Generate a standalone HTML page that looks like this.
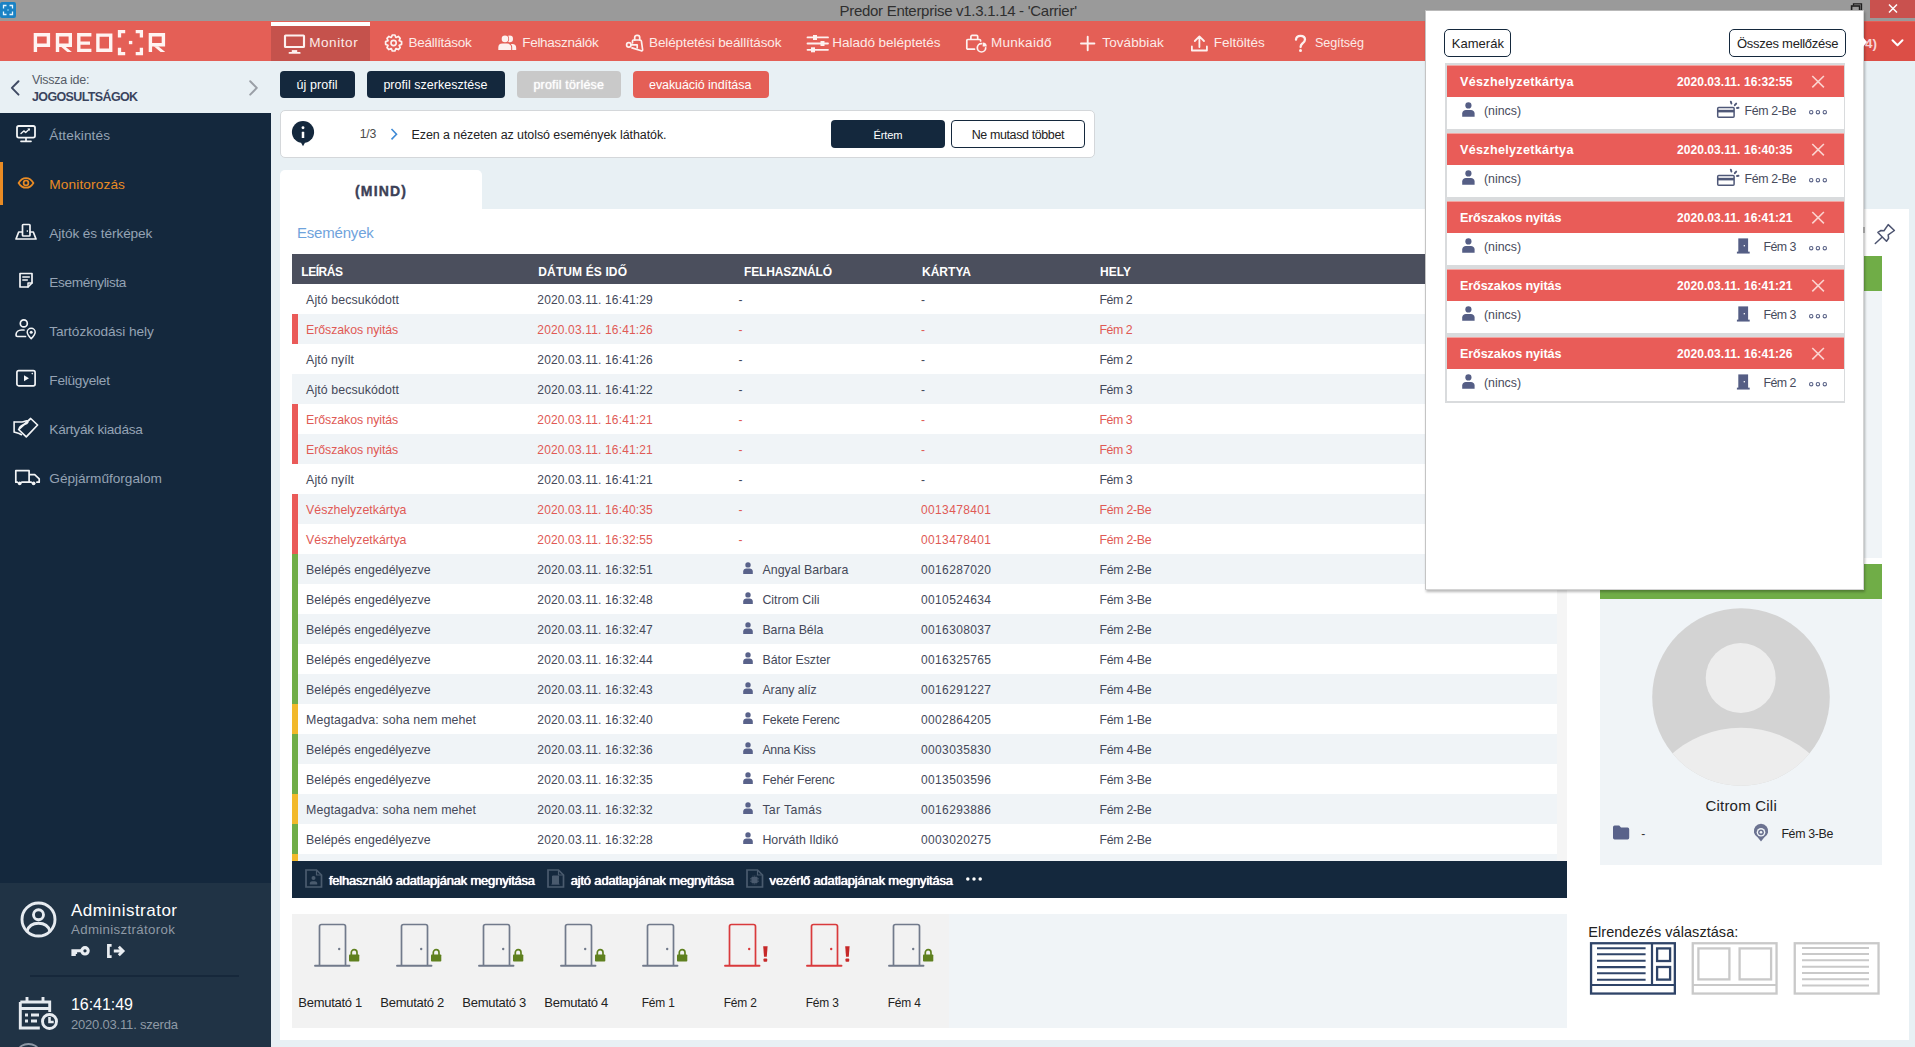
<!DOCTYPE html>
<html><head><meta charset="utf-8"><title>Predor Enterprise</title>
<style>
html,body{margin:0;padding:0;}
body{width:1915px;height:1047px;position:relative;overflow:hidden;background:#e8f0f4;font-family:"Liberation Sans",sans-serif;}
div,span.t,svg{position:absolute;}
div{box-sizing:border-box;}
span.t{white-space:pre;}
svg{overflow:visible;}
</style></head><body>
<div style="left:0px;top:0px;width:1915px;height:21.4px;background:#9a9a9a;"></div>
<div style="left:0px;top:2px;width:16px;height:16px;background:#1a82c4;border-radius:2px;"></div>
<svg style="left:0px;top:2px;" width="16" height="16" viewBox="0 0 16 16"><path d="M3.5 6.5v-3h3M9.5 3.5h3v3M12.5 9.5v3h-3M6.5 12.5h-3v-3" fill="none" stroke="#e6f6ff" stroke-width="1.3"/><rect x="7.3" y="7.3" width="1.4" height="1.4" fill="#8fd0f5"/></svg>
<span class="t" style="left:839.50px;top:0.00px;font-size:15.00px;line-height:21px;color:#2f2f2f;letter-spacing:-0.285px;">Predor Enterprise v1.3.1.14 - &#x27;Carrier&#x27;</span>
<div style="left:1870px;top:0px;width:45px;height:18px;background:#c9514e;"></div>
<svg style="left:1886px;top:2px;" width="14" height="14" viewBox="0 0 14 14"><path d="M3 2.5l8 8M11 2.5l-8 8" stroke="#fff" stroke-width="1.5" fill="none"/></svg>
<svg style="left:1849.5px;top:2px;" width="14" height="12" viewBox="0 0 14 12"><path d="M3.5 3.5v-1.700h8v6.500h-1.500" fill="none" stroke="#1e1e1e" stroke-width="1.3"/><rect x="1.6" y="4" width="8" height="6.5" fill="none" stroke="#1e1e1e" stroke-width="1.6"/></svg>
<div style="left:0px;top:21.4px;width:1915px;height:40.1px;background:#e45f56;"></div>
<div style="left:271px;top:21.8px;width:99px;height:39.7px;background:#c5524c;"></div>
<div style="left:271px;top:21.8px;width:99px;height:4.1px;background:#ffffff;"></div>
<span class="t" style="left:309.20px;top:33.00px;font-size:13.52px;line-height:19px;color:#fdebe8;letter-spacing:0.569px;">Monitor</span>
<span class="t" style="left:408.50px;top:33.00px;font-size:13.52px;line-height:19px;color:#fdebe8;letter-spacing:-0.284px;">Beállítások</span>
<span class="t" style="left:522.20px;top:33.00px;font-size:13.52px;line-height:19px;color:#fdebe8;letter-spacing:-0.288px;">Felhasználók</span>
<span class="t" style="left:649.10px;top:33.00px;font-size:13.52px;line-height:19px;color:#fdebe8;letter-spacing:-0.131px;">Beléptetési beállítások</span>
<span class="t" style="left:832.30px;top:33.00px;font-size:13.52px;line-height:19px;color:#fdebe8;letter-spacing:-0.043px;">Haladó beléptetés</span>
<span class="t" style="left:991.00px;top:33.00px;font-size:13.52px;line-height:19px;color:#fdebe8;letter-spacing:0.268px;">Munkaidő</span>
<span class="t" style="left:1102.30px;top:33.00px;font-size:13.52px;line-height:19px;color:#fdebe8;letter-spacing:0.077px;">Továbbiak</span>
<span class="t" style="left:1213.80px;top:33.00px;font-size:13.52px;line-height:19px;color:#fdebe8;letter-spacing:-0.012px;">Feltöltés</span>
<span class="t" style="left:1315.10px;top:34.00px;font-size:12.61px;line-height:18px;color:#fdebe8;letter-spacing:-0.139px;">Segítség</span>
<div style="left:1863px;top:21.8px;width:52px;height:39.7px;background:#dc4e46;"></div>
<svg style="left:283px;top:33px;" width="24" height="22" viewBox="0 0 24 22"><rect x="2" y="2.500" width="19" height="11.500" rx=".6" fill="none" stroke="#fdf1ef" stroke-width="2.15" stroke-linecap="round" stroke-linejoin="round"/><rect x="8.800" y="17.100" width="5.400" height="2.200" fill="#fdf1ef"/><rect x="5.600" y="18.900" width="12" height="1.900" rx=".9" fill="#fdf1ef"/></svg>
<svg style="left:383px;top:32px;" width="22" height="22" viewBox="0 0 22 22"><path d="M16.30 8.82 L18.59 9.67 L18.59 12.33 L16.30 13.18 L16.17 13.49 L17.19 15.71 L15.31 17.59 L13.09 16.57 L12.78 16.70 L11.93 18.99 L9.27 18.99 L8.42 16.70 L8.11 16.57 L5.89 17.59 L4.01 15.71 L5.03 13.49 L4.90 13.18 L2.61 12.33 L2.61 9.67 L4.90 8.82 L5.03 8.51 L4.01 6.29 L5.89 4.41 L8.11 5.43 L8.42 5.30 L9.27 3.01 L11.93 3.01 L12.78 5.30 L13.09 5.43 L15.31 4.41 L17.19 6.29 L16.17 8.51Z" fill="none" stroke="#fdf1ef" stroke-width="1.7" stroke-linecap="round" stroke-linejoin="round"/><circle cx="10.6" cy="11" r="2.6" fill="none" stroke="#fdf1ef" stroke-width="1.6" stroke-linecap="round" stroke-linejoin="round"/></svg>
<svg style="left:497px;top:34px;" width="22" height="18" viewBox="0 0 22 18"><circle cx="12.700" cy="4.900" r="3.300" fill="#fdf1ef"/><circle cx="8" cy="4.900" r="4.100" fill="#e45f56"/><circle cx="8" cy="4.900" r="3.300" fill="#fdf1ef"/><path d="M1.300 16.100v-2.500a4 4 0 0 1 4-4h4.900a4 4 0 0 1 4 4v2.500z" fill="#fdf1ef"/><path d="M15.200 16.100v-2.500c0-1.500-.5-2.800-1.400-3.700h1.400a4 4 0 0 1 4 4v2.200z" fill="#fdf1ef"/></svg>
<svg style="left:624px;top:33px;" width="22" height="22" viewBox="0 0 22 22"><path d="M10.700 7V4.500a2.200 2.200 0 0 1 2.200-2.200h.6a2.200 2.200 0 0 1 2.200 2.200V7" fill="none" stroke="#fdf1ef" stroke-width="1.7" stroke-linecap="round" stroke-linejoin="round"/><path d="M8.500 9.800v-1.800q0-1 1-1h6.500q1.200 0 1.400 1.200l1.200 8.300q.2 1.600-1.400 1.300l-9.200-2.900" fill="none" stroke="#fdf1ef" stroke-width="1.7" stroke-linecap="round" stroke-linejoin="round"/><circle cx="4.800" cy="11.900" r="2.200" fill="none" stroke="#fdf1ef" stroke-width="1.7" stroke-linecap="round" stroke-linejoin="round"/><path d="M7 11.900H13.200V14.800" fill="none" stroke="#fdf1ef" stroke-width="1.7" stroke-linecap="round" stroke-linejoin="round"/></svg>
<svg style="left:806px;top:34px;" width="24" height="20" viewBox="0 0 24 20"><path d="M1.5 3.400h20.500M1.500 9.500h20.500M1.500 15.800h20.500" fill="none" stroke="#fdf1ef" stroke-width="1.8" stroke-linecap="round" stroke-linejoin="round"/><rect x="7" y="1" width="4" height="5" fill="#fdf1ef"/><rect x="14.500" y="7" width="4" height="5" fill="#fdf1ef"/><rect x="5" y="13.300" width="4" height="5" fill="#fdf1ef"/></svg>
<svg style="left:964px;top:33px;" width="26" height="22" viewBox="0 0 26 22"><path d="M6.900 6V3.600a1.200 1.200 0 0 1 1.200-1.200h4.400a1.200 1.200 0 0 1 1.200 1.200V6" fill="none" stroke="#fdf1ef" stroke-width="1.7" stroke-linecap="round" stroke-linejoin="round"/><path d="M10.500 16.200H3.800a1 1 0 0 1-1-1V7.500a1 1 0 0 1 1-1H15.600a1 1 0 0 1 1 1V8" fill="none" stroke="#fdf1ef" stroke-width="1.7" stroke-linecap="round" stroke-linejoin="round"/><path d="M17.500 10.600A4.200 4.200 0 1 0 21.700 14.800" fill="none" stroke="#fdf1ef" stroke-width="1.7" stroke-linecap="round" stroke-linejoin="round"/><path d="M18.700 13.600V9.500A4.200 4.200 0 0 1 22.800 13.600Z" fill="#fdf1ef"/></svg>
<svg style="left:1079px;top:35px;" width="18" height="18" viewBox="0 0 18 18"><path d="M8.700 1.800v13.400M2 8.500h13.400" fill="none" stroke="#fdf1ef" stroke-width="1.9" stroke-linecap="round" stroke-linejoin="round"/></svg>
<svg style="left:1189px;top:33px;" width="22" height="22" viewBox="0 0 22 22"><path d="M10.400 14v-10.500M5.800 8l4.600-4.600l4.600 4.600" fill="none" stroke="#fdf1ef" stroke-width="1.8" stroke-linecap="round" stroke-linejoin="round"/><path d="M2.900 13.500v4h15v-4" fill="none" stroke="#fdf1ef" stroke-width="1.8" stroke-linecap="round" stroke-linejoin="round"/></svg>
<svg style="left:1293px;top:33px;" width="16" height="22" viewBox="0 0 16 22"><path d="M3 6.600c.2-2.500 2-3.800 4.500-3.800c2.600 0 4.500 1.400 4.500 3.800c0 2-1.300 2.900-2.600 3.900c-1.200.9-1.800 1.600-1.800 3.500" fill="none" stroke="#fdf1ef" stroke-width="2.3" stroke-linecap="round" stroke-linejoin="round"/><circle cx="7.500" cy="17.600" r="1.500" fill="#fdf1ef"/></svg>
<span class="t" style="left:1865.00px;top:34.00px;font-size:13.50px;line-height:19px;color:#f8d4d6;font-weight:700;">4)</span>
<svg style="left:1890px;top:36.6px;" width="16" height="12" viewBox="0 0 16 12"><path d="M2.500 3.300l5 5l5-5" fill="none" stroke="#fff" stroke-width="2" stroke-linecap="round" stroke-linejoin="round"/></svg>
<div style="left:0px;top:61.5px;width:271px;height:51.5px;background:#e8f0f4;"></div>
<div style="left:0px;top:113px;width:271px;height:934px;background:#14283d;"></div>
<div style="left:0px;top:883px;width:271px;height:164px;background:#203345;"></div>
<svg style="left:9px;top:78px;" width="14" height="20" viewBox="0 0 14 20"><path d="M9.500 3.200l-6.600 6.700l6.600 6.700" fill="none" stroke="#3f4a63" stroke-width="2" stroke-linecap="round" stroke-linejoin="round"/></svg>
<span class="t" style="left:32.00px;top:71.00px;font-size:12.48px;line-height:18px;color:#555b66;letter-spacing:-0.272px;">Vissza ide:</span>
<span class="t" style="left:32.00px;top:88.00px;font-size:12.48px;line-height:18px;color:#3a445e;font-weight:700;letter-spacing:-0.607px;">JOGOSULTSÁGOK</span>
<svg style="left:246px;top:78px;" width="14" height="20" viewBox="0 0 14 20"><path d="M4.200 3.200l6.600 6.700l-6.600 6.700" fill="none" stroke="#9a9fa6" stroke-width="2" stroke-linecap="round" stroke-linejoin="round"/></svg>
<span class="t" style="left:49.30px;top:126.00px;font-size:13.65px;line-height:19px;color:#95a3b4;letter-spacing:0.085px;">Áttekintés</span>
<span class="t" style="left:49.30px;top:175.00px;font-size:13.65px;line-height:19px;color:#e98b24;letter-spacing:0.135px;">Monitorozás</span>
<span class="t" style="left:49.30px;top:224.00px;font-size:13.65px;line-height:19px;color:#95a3b4;letter-spacing:-0.094px;">Ajtók és térképek</span>
<span class="t" style="left:49.30px;top:273.00px;font-size:13.65px;line-height:19px;color:#95a3b4;letter-spacing:-0.361px;">Eseménylista</span>
<span class="t" style="left:49.30px;top:322.00px;font-size:13.65px;line-height:19px;color:#95a3b4;letter-spacing:-0.048px;">Tartózkodási hely</span>
<span class="t" style="left:49.30px;top:371.00px;font-size:13.65px;line-height:19px;color:#95a3b4;letter-spacing:-0.253px;">Felügyelet</span>
<span class="t" style="left:49.30px;top:420.00px;font-size:13.65px;line-height:19px;color:#95a3b4;letter-spacing:-0.244px;">Kártyák kiadása</span>
<span class="t" style="left:49.30px;top:469.00px;font-size:13.65px;line-height:19px;color:#95a3b4;letter-spacing:-0.023px;">Gépjárműforgalom</span>
<div style="left:0px;top:162px;width:3px;height:43px;background:#e98b24;"></div>
<svg style="left:14px;top:123px;" width="24" height="21" viewBox="0 0 24 21"><rect x="3" y="3" width="18" height="11.600" rx="1.800" fill="none" stroke="#f2f4f6" stroke-width="1.8" stroke-linecap="round" stroke-linejoin="round"/><path d="M12 14.800v3M7 18.300h10" fill="none" stroke="#f2f4f6" stroke-width="1.7" stroke-linecap="round" stroke-linejoin="round"/><path d="M7 10.500l2.800-2.600l1.900 1.500l3.400-3.200" fill="none" stroke="#f2f4f6" stroke-width="1.4" stroke-linecap="round" stroke-linejoin="round"/><path d="M13.300 5.600h2.600v2.500z" fill="#f2f4f6"/></svg>
<svg style="left:16px;top:174px;" width="20" height="18" viewBox="0 0 20 18"><path d="M2.600 8.900c2-3.200 4.600-4.800 7.400-4.800s5.400 1.600 7.400 4.800c-2 3.200-4.600 4.800-7.400 4.800s-5.400-1.600-7.400-4.800z" fill="none" stroke="#e98b24" stroke-width="1.8" stroke-linecap="round" stroke-linejoin="round"/><circle cx="10" cy="8.900" r="2.400" fill="none" stroke="#e98b24" stroke-width="1.7" stroke-linecap="round" stroke-linejoin="round"/></svg>
<svg style="left:13px;top:221px;" width="26" height="21" viewBox="0 0 26 21"><rect x="9.500" y="3.500" width="7.500" height="11.500" rx=".8" fill="none" stroke="#f2f4f6" stroke-width="1.7" stroke-linecap="round" stroke-linejoin="round"/><path d="M9 11h-3.300l-2.700 7h20l-2.700-7h-3.300" fill="none" stroke="#f2f4f6" stroke-width="1.7" stroke-linecap="round" stroke-linejoin="round"/><rect x="13.700" y="9.300" width="1.300" height="1.500" fill="#f2f4f6"/></svg>
<svg style="left:17px;top:270px;" width="18" height="20" viewBox="0 0 18 20"><path d="M3 3.500h12v9.500l-4 4h-8z" fill="none" stroke="#f2f4f6" stroke-width="1.7" stroke-linecap="round" stroke-linejoin="round"/><path d="M15 13h-4v4" fill="none" stroke="#f2f4f6" stroke-width="1.5" stroke-linecap="round" stroke-linejoin="round"/><path d="M5.800 7h6.500M5.800 10h4.500" fill="none" stroke="#f2f4f6" stroke-width="1.5" stroke-linecap="round" stroke-linejoin="round"/></svg>
<svg style="left:13px;top:317px;" width="26" height="24" viewBox="0 0 26 24"><circle cx="10.800" cy="6.400" r="3.500" fill="none" stroke="#f2f4f6" stroke-width="1.7" stroke-linecap="round" stroke-linejoin="round"/><path d="M12.500 19.500h-8a1.500 1.500 0 0 1-1.500-1.500c0-3 2.500-5 5.500-5h2.500" fill="none" stroke="#f2f4f6" stroke-width="1.7" stroke-linecap="round" stroke-linejoin="round"/><path d="M18.200 21.800c-2.600-2.800-4-4.600-4-6.500a4 4 0 0 1 8 0c0 1.900-1.400 3.700-4 6.500z" fill="none" stroke="#f2f4f6" stroke-width="1.5" stroke-linecap="round" stroke-linejoin="round"/><circle cx="18.200" cy="15.200" r="1.500" fill="#f2f4f6"/></svg>
<svg style="left:14px;top:367px;" width="24" height="22" viewBox="0 0 24 22"><rect x="2.900" y="3.600" width="18.200" height="15.200" rx="1.800" fill="none" stroke="#f2f4f6" stroke-width="1.7" stroke-linecap="round" stroke-linejoin="round"/><path d="M10 8.200v6l5-3z" fill="#f2f4f6"/><circle cx="18.300" cy="6.600" r=".8" fill="#f2f4f6"/></svg>
<svg style="left:12px;top:416px;" width="28" height="24" viewBox="0 0 28 24"><path d="M6.600 13.500L18.700 2.500L25.600 9L14.300 20.800Z" fill="none" stroke="#f2f4f6" stroke-width="1.7" stroke-linecap="round" stroke-linejoin="round"/><path d="M2.100 5.800V16.300M2.100 6h6.500c2.500 0 3.500-.8 6.500-1.300M15.800 6.300c-1.500 2.800-5.500 1.200-8.300 5.200M2.100 16l5 1.500l2.400 1.200" fill="none" stroke="#f2f4f6" stroke-width="1.6" stroke-linecap="round" stroke-linejoin="round"/></svg>
<svg style="left:13px;top:467px;" width="28" height="20" viewBox="0 0 28 20"><path d="M2.800 15.200v-11.500h13.300v11.500M16.100 7.600h5.600l4.500 4.200v3.400h-2.300M18.200 15.200h-9.400M4.300 15.200h-1.500" fill="none" stroke="#f2f4f6" stroke-width="1.7" stroke-linecap="round" stroke-linejoin="round"/><circle cx="6.700" cy="16.300" r="1.900" fill="#f2f4f6"/><circle cx="20.600" cy="16.300" r="1.900" fill="#f2f4f6"/></svg>
<svg style="left:19.3px;top:900px;" width="40" height="40" viewBox="0 0 40 40"><circle cx="19.500" cy="19.500" r="16.500" fill="none" stroke="#e6ebf0" stroke-width="2.9" stroke-linecap="round" stroke-linejoin="round"/><circle cx="19.500" cy="14.800" r="5" fill="none" stroke="#e6ebf0" stroke-width="2.9" stroke-linecap="round" stroke-linejoin="round"/><path d="M8.200 31c1.500-5.500 6-7.800 11.300-7.800s9.800 2.300 11.300 7.800" fill="none" stroke="#e6ebf0" stroke-width="2.9" stroke-linecap="round" stroke-linejoin="round"/></svg>
<span class="t" style="left:71.00px;top:899.00px;font-size:17.00px;line-height:23px;color:#ffffff;letter-spacing:0.488px;">Administrator</span>
<span class="t" style="left:71.00px;top:920.00px;font-size:13.26px;line-height:19px;color:#8f9aa6;letter-spacing:0.350px;">Adminisztrátorok</span>
<svg style="left:71px;top:944px;" width="20" height="14" viewBox="0 0 20 14"><circle cx="14" cy="6.800" r="3.200" fill="none" stroke="#e9edf1" stroke-width="3.100"/><path d="M10.500 6.800h-8.600v3.600h1.400v-1.800h2.800" fill="none" stroke="#e9edf1" stroke-width="3"/></svg>
<svg style="left:106px;top:943px;" width="20" height="16" viewBox="0 0 20 16"><path d="M5.600 2.300h-3.200v11.400h3.200" fill="none" stroke="#e9edf1" stroke-width="2.700"/><path d="M7.800 8h8.500M12.800 3.800l4.300 4.200l-4.300 4.200" fill="none" stroke="#e9edf1" stroke-width="2.800"/></svg>
<div style="left:30px;top:975px;width:209px;height:2px;background:#16283b;"></div>
<svg style="left:17px;top:994px;" width="44" height="38" viewBox="0 0 44 38"><path d="M3.300 8h29.400v10M3.300 8v26h19.500M3.300 14.500h29.400" fill="none" stroke="#e6ebf0" stroke-width="2.900"/><path d="M10 3v6M26 3v6" stroke="#e6ebf0" stroke-width="2.900"/><path d="M8 21h3M14 21h8M8 27h3M14 27h6" stroke="#e6ebf0" stroke-width="2.900"/><circle cx="32.500" cy="27.500" r="7" fill="none" stroke="#e6ebf0" stroke-width="2.900"/><path d="M32.500 23v5h4.200" fill="none" stroke="#e6ebf0" stroke-width="2.600"/></svg>
<span class="t" style="left:71.00px;top:994.00px;font-size:16.00px;line-height:21px;color:#ffffff;letter-spacing:-0.040px;">16:41:49</span>
<span class="t" style="left:71.00px;top:1015.00px;font-size:13.00px;line-height:19px;color:#8f9aa6;letter-spacing:-0.197px;">2020.03.11. szerda</span>
<svg style="left:17px;top:1043px;" width="30" height="8" viewBox="0 0 30 8"><path d="M2 7a9.500 6 0 0 1 19 0" fill="none" stroke="#8c98a5" stroke-width="2"/></svg>
<div style="left:280px;top:71px;width:75px;height:27px;background:#14283d;border-radius:4px;"></div>
<span class="t" style="left:296.50px;top:76.00px;font-size:12.48px;line-height:18px;color:#fff;letter-spacing:0.108px;">új profil</span>
<div style="left:367px;top:71px;width:138px;height:27px;background:#14283d;border-radius:4px;"></div>
<span class="t" style="left:383.40px;top:76.00px;font-size:12.48px;line-height:18px;color:#fff;letter-spacing:0.047px;">profil szerkesztése</span>
<div style="left:517px;top:71px;width:104px;height:27px;background:#c9c9c9;border-radius:4px;"></div>
<span class="t" style="left:533.40px;top:76.00px;font-size:12.48px;line-height:18px;color:#ffffff;letter-spacing:0.202px;text-shadow:0 0 1.5px #fff;">profil törlése</span>
<div style="left:633px;top:71px;width:136px;height:27px;background:#e45f56;border-radius:4px;"></div>
<span class="t" style="left:649.00px;top:76.00px;font-size:12.48px;line-height:18px;color:#fff;letter-spacing:-0.057px;">evakuáció indítása</span>
<div style="left:280px;top:110px;width:815px;height:48px;background:#ffffff;border:1px solid #d4d7da;border-radius:5px;"></div>
<svg style="left:291.1px;top:120.1px;" width="24" height="27" viewBox="0 0 24 27"><circle cx="12" cy="12" r="11.100" fill="#14283d"/><path d="M9.800 22.300l2.200 3.900l2.200-3.900z" fill="#14283d"/><circle cx="12" cy="7.700" r="1.450" fill="#fff"/><rect x="10.750" y="11.800" width="2.500" height="6.300" rx=".3" fill="#fff"/></svg>
<span class="t" style="left:359.70px;top:125.00px;font-size:12.24px;line-height:18px;color:#4a4a4a;letter-spacing:-0.208px;">1/3</span>
<svg style="left:388px;top:127px;" width="12" height="14" viewBox="0 0 12 14"><path d="M3.500 2l5 5.200l-5 5.200" fill="none" stroke="#3f8ad6" stroke-width="1.600"/></svg>
<span class="t" style="left:411.50px;top:126.00px;font-size:12.48px;line-height:18px;color:#222;letter-spacing:-0.065px;">Ezen a nézeten az utolsó események láthatók.</span>
<div style="left:831px;top:120px;width:114px;height:28px;background:#14283d;border-radius:4px;"></div>
<span class="t" style="left:873.50px;top:127.00px;font-size:11.13px;line-height:16px;color:#fff;letter-spacing:-0.146px;">Értem</span>
<div style="left:951px;top:120px;width:134px;height:28px;background:#fff;border-radius:4px;border:1px solid #14283d;"></div>
<span class="t" style="left:971.70px;top:126.00px;font-size:12.48px;line-height:18px;color:#222;letter-spacing:-0.381px;">Ne mutasd többet</span>
<div style="left:280px;top:170px;width:202px;height:40px;background:#fff;border-radius:5px 5px 0 0;"></div>
<span class="t" style="left:355.00px;top:181.00px;font-size:14.00px;line-height:20px;color:#3b4056;font-weight:700;letter-spacing:1.180px;-webkit-text-stroke:.4px #3b4056;">(MIND)</span>
<div style="left:280px;top:209px;width:1629px;height:831px;background:#ffffff;"></div>
<span class="t" style="left:297.00px;top:222.00px;font-size:15.00px;line-height:21px;color:#6fa3dc;letter-spacing:-0.196px;">Események</span>
<svg style="left:0px;top:21px;" width="200" height="41" viewBox="0 21 200 41"><g fill="none" stroke="#fff4f2" stroke-width="3.400" stroke-linejoin="miter">
<path d="M35.400 52.100V34.700H48.400V45.200H36.400"/>
<path d="M57.500 52.100V34.700H70.300V45.200H58.500"/>
<path d="M91.400 34.700H78.800V50.400H91.400M79.500 43.100H90"/>
<path d="M97.900 35.100H110.700V50.300H97.900Z"/>
<path d="M150.400 52.100V34.700H163.400V44.800H151.400"/>
</g>
<path d="M60.800 46.500h4.400l6.700 5.600h-4.600z" fill="#fff4f2"/>
<path d="M153.800 46.200h4.400l7 5.900h-4.600z" fill="#fff4f2"/>
<g fill="none" stroke="#fff4f2" stroke-width="3.300">
<path d="M125.200 31.550H119.500V37.400M135.700 31.550H141.400V37.400M125.200 53.550H119.500V47.700M135.700 53.550H141.400V47.700"/>
</g><rect x="128.900" y="40.900" width="3.400" height="3.300" fill="#fff4f2"/></svg>
<div style="left:292px;top:254px;width:1265px;height:30px;background:#4b4f5d;"></div>
<span class="t" style="left:301.30px;top:263.00px;font-size:12.00px;line-height:18px;color:#fff;font-weight:700;letter-spacing:-0.461px;">LEÍRÁS</span>
<span class="t" style="left:538.30px;top:263.00px;font-size:12.00px;line-height:18px;color:#fff;font-weight:700;letter-spacing:0.124px;">DÁTUM ÉS IDŐ</span>
<span class="t" style="left:744.00px;top:263.00px;font-size:12.00px;line-height:18px;color:#fff;font-weight:700;letter-spacing:-0.133px;">FELHASZNÁLÓ</span>
<span class="t" style="left:922.00px;top:263.00px;font-size:12.00px;line-height:18px;color:#fff;font-weight:700;letter-spacing:0.020px;">KÁRTYA</span>
<span class="t" style="left:1100.00px;top:263.00px;font-size:12.00px;line-height:18px;color:#fff;font-weight:700;letter-spacing:0.032px;">HELY</span>
<span class="t" style="left:306.10px;top:291.00px;font-size:12.36px;line-height:18px;color:#444859;letter-spacing:0.101px;">Ajtó becsukódott</span>
<span class="t" style="left:537.30px;top:291.00px;font-size:12.00px;line-height:18px;color:#444859;letter-spacing:0.155px;">2020.03.11. 16:41:29</span>
<span class="t" style="left:738.50px;top:291.00px;font-size:12.00px;line-height:18px;color:#444859;">-</span>
<span class="t" style="left:921.00px;top:291.00px;font-size:12.00px;line-height:18px;color:#444859;">-</span>
<span class="t" style="left:1099.40px;top:291.00px;font-size:12.36px;line-height:18px;color:#444859;letter-spacing:-0.457px;">Fém 2</span>
<div style="left:292px;top:314px;width:1265px;height:30px;background:#f0f4f7;"></div>
<div style="left:292px;top:314px;width:6px;height:30px;background:#ea5a58;"></div>
<span class="t" style="left:306.10px;top:321.00px;font-size:12.36px;line-height:18px;color:#e05a55;letter-spacing:-0.082px;">Erőszakos nyitás</span>
<span class="t" style="left:537.30px;top:321.00px;font-size:12.00px;line-height:18px;color:#e05a55;letter-spacing:0.155px;">2020.03.11. 16:41:26</span>
<span class="t" style="left:738.50px;top:321.00px;font-size:12.00px;line-height:18px;color:#e05a55;">-</span>
<span class="t" style="left:921.00px;top:321.00px;font-size:12.00px;line-height:18px;color:#e05a55;">-</span>
<span class="t" style="left:1099.40px;top:321.00px;font-size:12.36px;line-height:18px;color:#e05a55;letter-spacing:-0.457px;">Fém 2</span>
<span class="t" style="left:306.10px;top:351.00px;font-size:12.36px;line-height:18px;color:#444859;letter-spacing:0.044px;">Ajtó nyílt</span>
<span class="t" style="left:537.30px;top:351.00px;font-size:12.00px;line-height:18px;color:#444859;letter-spacing:0.155px;">2020.03.11. 16:41:26</span>
<span class="t" style="left:738.50px;top:351.00px;font-size:12.00px;line-height:18px;color:#444859;">-</span>
<span class="t" style="left:921.00px;top:351.00px;font-size:12.00px;line-height:18px;color:#444859;">-</span>
<span class="t" style="left:1099.40px;top:351.00px;font-size:12.36px;line-height:18px;color:#444859;letter-spacing:-0.457px;">Fém 2</span>
<div style="left:292px;top:374px;width:1265px;height:30px;background:#f0f4f7;"></div>
<span class="t" style="left:306.10px;top:381.00px;font-size:12.36px;line-height:18px;color:#444859;letter-spacing:0.101px;">Ajtó becsukódott</span>
<span class="t" style="left:537.30px;top:381.00px;font-size:12.00px;line-height:18px;color:#444859;letter-spacing:0.155px;">2020.03.11. 16:41:22</span>
<span class="t" style="left:738.50px;top:381.00px;font-size:12.00px;line-height:18px;color:#444859;">-</span>
<span class="t" style="left:921.00px;top:381.00px;font-size:12.00px;line-height:18px;color:#444859;">-</span>
<span class="t" style="left:1099.40px;top:381.00px;font-size:12.36px;line-height:18px;color:#444859;letter-spacing:-0.457px;">Fém 3</span>
<div style="left:292px;top:404px;width:6px;height:30px;background:#ea5a58;"></div>
<span class="t" style="left:306.10px;top:411.00px;font-size:12.36px;line-height:18px;color:#e05a55;letter-spacing:-0.082px;">Erőszakos nyitás</span>
<span class="t" style="left:537.30px;top:411.00px;font-size:12.00px;line-height:18px;color:#e05a55;letter-spacing:0.155px;">2020.03.11. 16:41:21</span>
<span class="t" style="left:738.50px;top:411.00px;font-size:12.00px;line-height:18px;color:#e05a55;">-</span>
<span class="t" style="left:921.00px;top:411.00px;font-size:12.00px;line-height:18px;color:#e05a55;">-</span>
<span class="t" style="left:1099.40px;top:411.00px;font-size:12.36px;line-height:18px;color:#e05a55;letter-spacing:-0.457px;">Fém 3</span>
<div style="left:292px;top:434px;width:1265px;height:30px;background:#f0f4f7;"></div>
<div style="left:292px;top:434px;width:6px;height:30px;background:#ea5a58;"></div>
<span class="t" style="left:306.10px;top:441.00px;font-size:12.36px;line-height:18px;color:#e05a55;letter-spacing:-0.082px;">Erőszakos nyitás</span>
<span class="t" style="left:537.30px;top:441.00px;font-size:12.00px;line-height:18px;color:#e05a55;letter-spacing:0.155px;">2020.03.11. 16:41:21</span>
<span class="t" style="left:738.50px;top:441.00px;font-size:12.00px;line-height:18px;color:#e05a55;">-</span>
<span class="t" style="left:921.00px;top:441.00px;font-size:12.00px;line-height:18px;color:#e05a55;">-</span>
<span class="t" style="left:1099.40px;top:441.00px;font-size:12.36px;line-height:18px;color:#e05a55;letter-spacing:-0.457px;">Fém 3</span>
<span class="t" style="left:306.10px;top:471.00px;font-size:12.36px;line-height:18px;color:#444859;letter-spacing:0.044px;">Ajtó nyílt</span>
<span class="t" style="left:537.30px;top:471.00px;font-size:12.00px;line-height:18px;color:#444859;letter-spacing:0.155px;">2020.03.11. 16:41:21</span>
<span class="t" style="left:738.50px;top:471.00px;font-size:12.00px;line-height:18px;color:#444859;">-</span>
<span class="t" style="left:921.00px;top:471.00px;font-size:12.00px;line-height:18px;color:#444859;">-</span>
<span class="t" style="left:1099.40px;top:471.00px;font-size:12.36px;line-height:18px;color:#444859;letter-spacing:-0.457px;">Fém 3</span>
<div style="left:292px;top:494px;width:1265px;height:30px;background:#f0f4f7;"></div>
<div style="left:292px;top:494px;width:6px;height:30px;background:#ea5a58;"></div>
<span class="t" style="left:306.10px;top:501.00px;font-size:12.36px;line-height:18px;color:#e05a55;letter-spacing:0.006px;">Vészhelyzetkártya</span>
<span class="t" style="left:537.30px;top:501.00px;font-size:12.00px;line-height:18px;color:#e05a55;letter-spacing:0.155px;">2020.03.11. 16:40:35</span>
<span class="t" style="left:738.50px;top:501.00px;font-size:12.00px;line-height:18px;color:#e05a55;">-</span>
<span class="t" style="left:921.00px;top:501.00px;font-size:12.00px;line-height:18px;color:#e05a55;letter-spacing:0.362px;">0013478401</span>
<span class="t" style="left:1099.40px;top:501.00px;font-size:12.36px;line-height:18px;color:#e05a55;letter-spacing:-0.281px;">Fém 2-Be</span>
<div style="left:292px;top:524px;width:6px;height:30px;background:#ea5a58;"></div>
<span class="t" style="left:306.10px;top:531.00px;font-size:12.36px;line-height:18px;color:#e05a55;letter-spacing:0.006px;">Vészhelyzetkártya</span>
<span class="t" style="left:537.30px;top:531.00px;font-size:12.00px;line-height:18px;color:#e05a55;letter-spacing:0.155px;">2020.03.11. 16:32:55</span>
<span class="t" style="left:738.50px;top:531.00px;font-size:12.00px;line-height:18px;color:#e05a55;">-</span>
<span class="t" style="left:921.00px;top:531.00px;font-size:12.00px;line-height:18px;color:#e05a55;letter-spacing:0.362px;">0013478401</span>
<span class="t" style="left:1099.40px;top:531.00px;font-size:12.36px;line-height:18px;color:#e05a55;letter-spacing:-0.281px;">Fém 2-Be</span>
<div style="left:292px;top:554px;width:1265px;height:30px;background:#f0f4f7;"></div>
<div style="left:292px;top:554px;width:6px;height:30px;background:#70ad47;"></div>
<span class="t" style="left:306.10px;top:561.00px;font-size:12.36px;line-height:18px;color:#444859;letter-spacing:0.006px;">Belépés engedélyezve</span>
<span class="t" style="left:537.30px;top:561.00px;font-size:12.00px;line-height:18px;color:#444859;letter-spacing:0.155px;">2020.03.11. 16:32:51</span>
<svg style="left:743px;top:562px;" width="10" height="12.8" viewBox="0 0 10 12.8"><g fill="#59628a"><circle cx="5" cy="2.900" r="2.700"/><path d="M.200 12v-2.400c0-2 1.500-3.200 3.200-3.200h3.200c1.700 0 3.200 1.200 3.200 3.200v2.400z"/></g></svg>
<span class="t" style="left:762.40px;top:561.00px;font-size:12.36px;line-height:18px;color:#444859;letter-spacing:0.061px;">Angyal Barbara</span>
<span class="t" style="left:921.00px;top:561.00px;font-size:12.00px;line-height:18px;color:#444859;letter-spacing:0.362px;">0016287020</span>
<span class="t" style="left:1099.40px;top:561.00px;font-size:12.36px;line-height:18px;color:#444859;letter-spacing:-0.281px;">Fém 2-Be</span>
<div style="left:292px;top:584px;width:6px;height:30px;background:#70ad47;"></div>
<span class="t" style="left:306.10px;top:591.00px;font-size:12.36px;line-height:18px;color:#444859;letter-spacing:0.006px;">Belépés engedélyezve</span>
<span class="t" style="left:537.30px;top:591.00px;font-size:12.00px;line-height:18px;color:#444859;letter-spacing:0.155px;">2020.03.11. 16:32:48</span>
<svg style="left:743px;top:592px;" width="10" height="12.8" viewBox="0 0 10 12.8"><g fill="#59628a"><circle cx="5" cy="2.900" r="2.700"/><path d="M.200 12v-2.400c0-2 1.500-3.200 3.200-3.200h3.200c1.700 0 3.200 1.200 3.200 3.200v2.400z"/></g></svg>
<span class="t" style="left:762.40px;top:591.00px;font-size:12.36px;line-height:18px;color:#444859;letter-spacing:0.011px;">Citrom Cili</span>
<span class="t" style="left:921.00px;top:591.00px;font-size:12.00px;line-height:18px;color:#444859;letter-spacing:0.362px;">0010524634</span>
<span class="t" style="left:1099.40px;top:591.00px;font-size:12.36px;line-height:18px;color:#444859;letter-spacing:-0.281px;">Fém 3-Be</span>
<div style="left:292px;top:614px;width:1265px;height:30px;background:#f0f4f7;"></div>
<div style="left:292px;top:614px;width:6px;height:30px;background:#70ad47;"></div>
<span class="t" style="left:306.10px;top:621.00px;font-size:12.36px;line-height:18px;color:#444859;letter-spacing:0.006px;">Belépés engedélyezve</span>
<span class="t" style="left:537.30px;top:621.00px;font-size:12.00px;line-height:18px;color:#444859;letter-spacing:0.155px;">2020.03.11. 16:32:47</span>
<svg style="left:743px;top:622px;" width="10" height="12.8" viewBox="0 0 10 12.8"><g fill="#59628a"><circle cx="5" cy="2.900" r="2.700"/><path d="M.200 12v-2.400c0-2 1.500-3.200 3.200-3.200h3.200c1.700 0 3.200 1.200 3.200 3.200v2.400z"/></g></svg>
<span class="t" style="left:762.40px;top:621.00px;font-size:12.36px;line-height:18px;color:#444859;letter-spacing:-0.029px;">Barna Béla</span>
<span class="t" style="left:921.00px;top:621.00px;font-size:12.00px;line-height:18px;color:#444859;letter-spacing:0.362px;">0016308037</span>
<span class="t" style="left:1099.40px;top:621.00px;font-size:12.36px;line-height:18px;color:#444859;letter-spacing:-0.281px;">Fém 2-Be</span>
<div style="left:292px;top:644px;width:6px;height:30px;background:#70ad47;"></div>
<span class="t" style="left:306.10px;top:651.00px;font-size:12.36px;line-height:18px;color:#444859;letter-spacing:0.006px;">Belépés engedélyezve</span>
<span class="t" style="left:537.30px;top:651.00px;font-size:12.00px;line-height:18px;color:#444859;letter-spacing:0.155px;">2020.03.11. 16:32:44</span>
<svg style="left:743px;top:652px;" width="10" height="12.8" viewBox="0 0 10 12.8"><g fill="#59628a"><circle cx="5" cy="2.900" r="2.700"/><path d="M.200 12v-2.400c0-2 1.500-3.200 3.200-3.200h3.200c1.700 0 3.200 1.200 3.200 3.200v2.400z"/></g></svg>
<span class="t" style="left:762.40px;top:651.00px;font-size:12.36px;line-height:18px;color:#444859;letter-spacing:0.009px;">Bátor Eszter</span>
<span class="t" style="left:921.00px;top:651.00px;font-size:12.00px;line-height:18px;color:#444859;letter-spacing:0.362px;">0016325765</span>
<span class="t" style="left:1099.40px;top:651.00px;font-size:12.36px;line-height:18px;color:#444859;letter-spacing:-0.281px;">Fém 4-Be</span>
<div style="left:292px;top:674px;width:1265px;height:30px;background:#f0f4f7;"></div>
<div style="left:292px;top:674px;width:6px;height:30px;background:#70ad47;"></div>
<span class="t" style="left:306.10px;top:681.00px;font-size:12.36px;line-height:18px;color:#444859;letter-spacing:0.006px;">Belépés engedélyezve</span>
<span class="t" style="left:537.30px;top:681.00px;font-size:12.00px;line-height:18px;color:#444859;letter-spacing:0.155px;">2020.03.11. 16:32:43</span>
<svg style="left:743px;top:682px;" width="10" height="12.8" viewBox="0 0 10 12.8"><g fill="#59628a"><circle cx="5" cy="2.900" r="2.700"/><path d="M.200 12v-2.400c0-2 1.500-3.200 3.200-3.200h3.200c1.700 0 3.200 1.200 3.200 3.200v2.400z"/></g></svg>
<span class="t" style="left:762.40px;top:681.00px;font-size:12.36px;line-height:18px;color:#444859;letter-spacing:-0.062px;">Arany alíz</span>
<span class="t" style="left:921.00px;top:681.00px;font-size:12.00px;line-height:18px;color:#444859;letter-spacing:0.362px;">0016291227</span>
<span class="t" style="left:1099.40px;top:681.00px;font-size:12.36px;line-height:18px;color:#444859;letter-spacing:-0.281px;">Fém 4-Be</span>
<div style="left:292px;top:704px;width:6px;height:30px;background:#f2b92a;"></div>
<span class="t" style="left:306.10px;top:711.00px;font-size:12.36px;line-height:18px;color:#444859;letter-spacing:0.117px;">Megtagadva: soha nem mehet</span>
<span class="t" style="left:537.30px;top:711.00px;font-size:12.00px;line-height:18px;color:#444859;letter-spacing:0.155px;">2020.03.11. 16:32:40</span>
<svg style="left:743px;top:712px;" width="10" height="12.8" viewBox="0 0 10 12.8"><g fill="#59628a"><circle cx="5" cy="2.900" r="2.700"/><path d="M.200 12v-2.400c0-2 1.500-3.200 3.200-3.200h3.200c1.700 0 3.200 1.200 3.200 3.200v2.400z"/></g></svg>
<span class="t" style="left:762.40px;top:711.00px;font-size:12.36px;line-height:18px;color:#444859;letter-spacing:-0.191px;">Fekete Ferenc</span>
<span class="t" style="left:921.00px;top:711.00px;font-size:12.00px;line-height:18px;color:#444859;letter-spacing:0.362px;">0002864205</span>
<span class="t" style="left:1099.40px;top:711.00px;font-size:12.36px;line-height:18px;color:#444859;letter-spacing:-0.281px;">Fém 1-Be</span>
<div style="left:292px;top:734px;width:1265px;height:30px;background:#f0f4f7;"></div>
<div style="left:292px;top:734px;width:6px;height:30px;background:#70ad47;"></div>
<span class="t" style="left:306.10px;top:741.00px;font-size:12.36px;line-height:18px;color:#444859;letter-spacing:0.006px;">Belépés engedélyezve</span>
<span class="t" style="left:537.30px;top:741.00px;font-size:12.00px;line-height:18px;color:#444859;letter-spacing:0.155px;">2020.03.11. 16:32:36</span>
<svg style="left:743px;top:742px;" width="10" height="12.8" viewBox="0 0 10 12.8"><g fill="#59628a"><circle cx="5" cy="2.900" r="2.700"/><path d="M.200 12v-2.400c0-2 1.500-3.200 3.200-3.200h3.200c1.700 0 3.200 1.200 3.200 3.200v2.400z"/></g></svg>
<span class="t" style="left:762.40px;top:741.00px;font-size:12.36px;line-height:18px;color:#444859;letter-spacing:-0.294px;">Anna Kiss</span>
<span class="t" style="left:921.00px;top:741.00px;font-size:12.00px;line-height:18px;color:#444859;letter-spacing:0.362px;">0003035830</span>
<span class="t" style="left:1099.40px;top:741.00px;font-size:12.36px;line-height:18px;color:#444859;letter-spacing:-0.281px;">Fém 4-Be</span>
<div style="left:292px;top:764px;width:6px;height:30px;background:#70ad47;"></div>
<span class="t" style="left:306.10px;top:771.00px;font-size:12.36px;line-height:18px;color:#444859;letter-spacing:0.006px;">Belépés engedélyezve</span>
<span class="t" style="left:537.30px;top:771.00px;font-size:12.00px;line-height:18px;color:#444859;letter-spacing:0.155px;">2020.03.11. 16:32:35</span>
<svg style="left:743px;top:772px;" width="10" height="12.8" viewBox="0 0 10 12.8"><g fill="#59628a"><circle cx="5" cy="2.900" r="2.700"/><path d="M.200 12v-2.400c0-2 1.500-3.200 3.200-3.200h3.200c1.700 0 3.200 1.200 3.200 3.200v2.400z"/></g></svg>
<span class="t" style="left:762.40px;top:771.00px;font-size:12.36px;line-height:18px;color:#444859;letter-spacing:-0.181px;">Fehér Ferenc</span>
<span class="t" style="left:921.00px;top:771.00px;font-size:12.00px;line-height:18px;color:#444859;letter-spacing:0.362px;">0013503596</span>
<span class="t" style="left:1099.40px;top:771.00px;font-size:12.36px;line-height:18px;color:#444859;letter-spacing:-0.281px;">Fém 3-Be</span>
<div style="left:292px;top:794px;width:1265px;height:30px;background:#f0f4f7;"></div>
<div style="left:292px;top:794px;width:6px;height:30px;background:#f2b92a;"></div>
<span class="t" style="left:306.10px;top:801.00px;font-size:12.36px;line-height:18px;color:#444859;letter-spacing:0.117px;">Megtagadva: soha nem mehet</span>
<span class="t" style="left:537.30px;top:801.00px;font-size:12.00px;line-height:18px;color:#444859;letter-spacing:0.155px;">2020.03.11. 16:32:32</span>
<svg style="left:743px;top:802px;" width="10" height="12.8" viewBox="0 0 10 12.8"><g fill="#59628a"><circle cx="5" cy="2.900" r="2.700"/><path d="M.200 12v-2.400c0-2 1.500-3.200 3.200-3.200h3.200c1.700 0 3.200 1.200 3.200 3.200v2.400z"/></g></svg>
<span class="t" style="left:762.40px;top:801.00px;font-size:12.36px;line-height:18px;color:#444859;letter-spacing:0.302px;">Tar Tamás</span>
<span class="t" style="left:921.00px;top:801.00px;font-size:12.00px;line-height:18px;color:#444859;letter-spacing:0.362px;">0016293886</span>
<span class="t" style="left:1099.40px;top:801.00px;font-size:12.36px;line-height:18px;color:#444859;letter-spacing:-0.281px;">Fém 2-Be</span>
<div style="left:292px;top:824px;width:6px;height:30px;background:#70ad47;"></div>
<span class="t" style="left:306.10px;top:831.00px;font-size:12.36px;line-height:18px;color:#444859;letter-spacing:0.006px;">Belépés engedélyezve</span>
<span class="t" style="left:537.30px;top:831.00px;font-size:12.00px;line-height:18px;color:#444859;letter-spacing:0.155px;">2020.03.11. 16:32:28</span>
<svg style="left:743px;top:832px;" width="10" height="12.8" viewBox="0 0 10 12.8"><g fill="#59628a"><circle cx="5" cy="2.900" r="2.700"/><path d="M.200 12v-2.400c0-2 1.500-3.200 3.200-3.200h3.200c1.700 0 3.200 1.200 3.200 3.200v2.400z"/></g></svg>
<span class="t" style="left:762.40px;top:831.00px;font-size:12.36px;line-height:18px;color:#444859;letter-spacing:0.033px;">Horváth Ildikó</span>
<span class="t" style="left:921.00px;top:831.00px;font-size:12.00px;line-height:18px;color:#444859;letter-spacing:0.362px;">0003020275</span>
<span class="t" style="left:1099.40px;top:831.00px;font-size:12.36px;line-height:18px;color:#444859;letter-spacing:-0.281px;">Fém 2-Be</span>
<div style="left:292px;top:854px;width:1265px;height:7px;background:#f0f4f7;"></div>
<div style="left:292px;top:854px;width:6px;height:7px;background:#f2b92a;"></div>
<div style="left:1557px;top:284px;width:10px;height:577px;background:#f5f5f5;"></div>
<div style="left:292px;top:861px;width:1275px;height:37px;background:#14283d;"></div>
<svg style="left:304.7px;top:869.2px;" width="18" height="19" viewBox="0 0 18 19"><path d="M1 1h10.500l5 5v12h-15.500z" fill="none" stroke="#4a5b6e" stroke-width="1.700"/><path d="M11.500 1v5h5" fill="none" stroke="#4a5b6e" stroke-width="1.200"/><circle cx="8.500" cy="9" r="2" fill="#4a5b6e"/><path d="M4.800 15.500v-1c0-1.400 1.200-2.200 2.300-2.200h2.800c1.100 0 2.300 .8 2.300 2.200v1z" fill="#4a5b6e"/></svg>
<svg style="left:546.6px;top:869.2px;" width="18" height="19" viewBox="0 0 18 19"><path d="M1 1h10.500l5 5v12h-15.500z" fill="none" stroke="#4a5b6e" stroke-width="1.700"/><path d="M11.500 1v5h5" fill="none" stroke="#4a5b6e" stroke-width="1.200"/><path d="M5.500 15v-8h6v8M4.500 15.200h8" fill="#4a5b6e" stroke="#4a5b6e" stroke-width="1"/></svg>
<svg style="left:745.6px;top:869.2px;" width="18" height="19" viewBox="0 0 18 19"><path d="M1 1h10.500l5 5v12h-15.500z" fill="none" stroke="#4a5b6e" stroke-width="1.700"/><path d="M11.500 1v5h5" fill="none" stroke="#4a5b6e" stroke-width="1.200"/><rect x="5.500" y="8" width="6" height="6" fill="#4a5b6e"/><path d="M4 9.500h9M4 11h9M4 12.500h9M7 6.500v9M8.500 6.500v9M10 6.500v9" stroke="#4a5b6e" stroke-width=".6"/></svg>
<span class="t" style="left:328.90px;top:871.00px;font-size:13.00px;line-height:19px;color:#fff;letter-spacing:-0.206px;text-shadow:0 0 .7px #fff,0 0 .7px #fff;">felhasználó adatlapjának megnyitása</span>
<span class="t" style="left:570.70px;top:871.00px;font-size:13.00px;line-height:19px;color:#fff;letter-spacing:-0.185px;text-shadow:0 0 .7px #fff,0 0 .7px #fff;">ajtó adatlapjának megnyitása</span>
<span class="t" style="left:769.60px;top:871.00px;font-size:13.00px;line-height:19px;color:#fff;letter-spacing:-0.195px;text-shadow:0 0 .7px #fff,0 0 .7px #fff;">vezérlő adatlapjának megnyitása</span>
<svg style="left:964px;top:876px;" width="20" height="6" viewBox="0 0 20 6"><circle cx="3.800" cy="3.100" r="1.750" fill="#fff"/><circle cx="10" cy="3.100" r="1.750" fill="#fff"/><circle cx="16.200" cy="3.100" r="1.750" fill="#fff"/></svg>
<div style="left:292px;top:914px;width:1275px;height:114px;background:#f0f4f7;"></div>
<div style="left:292px;top:914px;width:657px;height:114px;background:#f2f2f2;"></div>
<svg style="left:313px;top:922px;" width="50" height="48" viewBox="0 0 50 48"><path d="M6.500 43.500v-39a2 2 0 0 1 2-2h22a2 2 0 0 1 2 2v39" fill="none" stroke="#717a8b" stroke-width="1.700"/><path d="M2 43.700h34.500" stroke="#717a8b" stroke-width="1.900" stroke-linecap="round"/><circle cx="26.200" cy="27" r="1.200" fill="#717a8b"/><rect x="36" y="32.500" width="10.300" height="7" rx=".8" fill="#5f801f"/><path d="M38.300 33v-2.500a2.850 2.850 0 0 1 5.700 0v2.500" fill="none" stroke="#5f801f" stroke-width="1.700"/></svg>
<span class="t" style="left:298.35px;top:993.00px;font-size:13.00px;line-height:19px;color:#222;letter-spacing:-0.287px;">Bemutató 1</span>
<svg style="left:395px;top:922px;" width="50" height="48" viewBox="0 0 50 48"><path d="M6.500 43.500v-39a2 2 0 0 1 2-2h22a2 2 0 0 1 2 2v39" fill="none" stroke="#717a8b" stroke-width="1.700"/><path d="M2 43.700h34.500" stroke="#717a8b" stroke-width="1.900" stroke-linecap="round"/><circle cx="26.200" cy="27" r="1.200" fill="#717a8b"/><rect x="36" y="32.500" width="10.300" height="7" rx=".8" fill="#5f801f"/><path d="M38.300 33v-2.500a2.850 2.850 0 0 1 5.700 0v2.500" fill="none" stroke="#5f801f" stroke-width="1.700"/></svg>
<span class="t" style="left:380.35px;top:993.00px;font-size:13.00px;line-height:19px;color:#222;letter-spacing:-0.287px;">Bemutató 2</span>
<svg style="left:477px;top:922px;" width="50" height="48" viewBox="0 0 50 48"><path d="M6.500 43.500v-39a2 2 0 0 1 2-2h22a2 2 0 0 1 2 2v39" fill="none" stroke="#717a8b" stroke-width="1.700"/><path d="M2 43.700h34.500" stroke="#717a8b" stroke-width="1.900" stroke-linecap="round"/><circle cx="26.200" cy="27" r="1.200" fill="#717a8b"/><rect x="36" y="32.500" width="10.300" height="7" rx=".8" fill="#5f801f"/><path d="M38.300 33v-2.500a2.850 2.850 0 0 1 5.700 0v2.500" fill="none" stroke="#5f801f" stroke-width="1.700"/></svg>
<span class="t" style="left:462.35px;top:993.00px;font-size:13.00px;line-height:19px;color:#222;letter-spacing:-0.287px;">Bemutató 3</span>
<svg style="left:559px;top:922px;" width="50" height="48" viewBox="0 0 50 48"><path d="M6.500 43.500v-39a2 2 0 0 1 2-2h22a2 2 0 0 1 2 2v39" fill="none" stroke="#717a8b" stroke-width="1.700"/><path d="M2 43.700h34.500" stroke="#717a8b" stroke-width="1.900" stroke-linecap="round"/><circle cx="26.200" cy="27" r="1.200" fill="#717a8b"/><rect x="36" y="32.500" width="10.300" height="7" rx=".8" fill="#5f801f"/><path d="M38.300 33v-2.500a2.850 2.850 0 0 1 5.700 0v2.500" fill="none" stroke="#5f801f" stroke-width="1.700"/></svg>
<span class="t" style="left:544.35px;top:993.00px;font-size:13.00px;line-height:19px;color:#222;letter-spacing:-0.287px;">Bemutató 4</span>
<svg style="left:641px;top:922px;" width="50" height="48" viewBox="0 0 50 48"><path d="M6.500 43.500v-39a2 2 0 0 1 2-2h22a2 2 0 0 1 2 2v39" fill="none" stroke="#717a8b" stroke-width="1.700"/><path d="M2 43.700h34.500" stroke="#717a8b" stroke-width="1.900" stroke-linecap="round"/><circle cx="26.200" cy="27" r="1.200" fill="#717a8b"/><rect x="36" y="32.500" width="10.300" height="7" rx=".8" fill="#5f801f"/><path d="M38.300 33v-2.500a2.850 2.850 0 0 1 5.700 0v2.500" fill="none" stroke="#5f801f" stroke-width="1.700"/></svg>
<span class="t" style="left:641.70px;top:994.00px;font-size:11.95px;line-height:18px;color:#222;letter-spacing:-0.166px;">Fém 1</span>
<svg style="left:723px;top:922px;" width="50" height="48" viewBox="0 0 50 48"><path d="M6.500 43.500v-39a2 2 0 0 1 2-2h22a2 2 0 0 1 2 2v39" fill="none" stroke="#d93a3c" stroke-width="1.700"/><path d="M2 43.700h34.500" stroke="#d93a3c" stroke-width="1.900" stroke-linecap="round"/><circle cx="26.200" cy="27" r="1.200" fill="#d93a3c"/><path d="M40.200 24.200h4.400l-.8 10.500h-2.800z" fill="#c62828"/><rect x="40.500" y="36.500" width="3.700" height="3.200" rx=".8" fill="#c62828"/></svg>
<span class="t" style="left:723.70px;top:994.00px;font-size:11.95px;line-height:18px;color:#222;letter-spacing:-0.166px;">Fém 2</span>
<svg style="left:805px;top:922px;" width="50" height="48" viewBox="0 0 50 48"><path d="M6.500 43.500v-39a2 2 0 0 1 2-2h22a2 2 0 0 1 2 2v39" fill="none" stroke="#d93a3c" stroke-width="1.700"/><path d="M2 43.700h34.500" stroke="#d93a3c" stroke-width="1.900" stroke-linecap="round"/><circle cx="26.200" cy="27" r="1.200" fill="#d93a3c"/><path d="M40.200 24.200h4.400l-.8 10.500h-2.800z" fill="#c62828"/><rect x="40.500" y="36.500" width="3.700" height="3.200" rx=".8" fill="#c62828"/></svg>
<span class="t" style="left:805.70px;top:994.00px;font-size:11.95px;line-height:18px;color:#222;letter-spacing:-0.166px;">Fém 3</span>
<svg style="left:887px;top:922px;" width="50" height="48" viewBox="0 0 50 48"><path d="M6.500 43.500v-39a2 2 0 0 1 2-2h22a2 2 0 0 1 2 2v39" fill="none" stroke="#717a8b" stroke-width="1.700"/><path d="M2 43.700h34.500" stroke="#717a8b" stroke-width="1.900" stroke-linecap="round"/><circle cx="26.200" cy="27" r="1.200" fill="#717a8b"/><rect x="36" y="32.500" width="10.300" height="7" rx=".8" fill="#5f801f"/><path d="M38.300 33v-2.500a2.850 2.850 0 0 1 5.700 0v2.500" fill="none" stroke="#5f801f" stroke-width="1.700"/></svg>
<span class="t" style="left:887.70px;top:994.00px;font-size:11.95px;line-height:18px;color:#222;letter-spacing:-0.166px;">Fém 4</span>
<div style="left:1600px;top:256px;width:282px;height:35px;background:#70ad47;"></div>
<div style="left:1600px;top:291px;width:282px;height:267px;background:#f0f4f7;"></div>
<div style="left:1600px;top:564.1px;width:282px;height:34.6px;background:#70ad47;"></div>
<div style="left:1600px;top:598.7px;width:282px;height:266px;background:#f0f4f7;"></div>
<svg style="left:1652px;top:608px;" width="178" height="178" viewBox="0 0 178 178"><defs><clipPath id="av"><circle cx="89" cy="89" r="88.800"/></clipPath></defs><circle cx="89" cy="89" r="88.800" fill="#d3d3d3"/><g clip-path="url(#av)"><circle cx="88.700" cy="70" r="35" fill="#ededed"/><circle cx="89" cy="224" r="104.300" fill="#ededed"/></g></svg>
<span class="t" style="left:1705.45px;top:795.00px;font-size:15.00px;line-height:21px;color:#222;letter-spacing:0.213px;">Citrom Cili</span>
<svg style="left:1613px;top:825px;" width="17" height="15" viewBox="0 0 17 15"><path d="M0 2.200a1.600 1.600 0 0 1 1.600-1.600h4.600l1.800 2h6.600a1.600 1.600 0 0 1 1.600 1.600v8.600a1.600 1.600 0 0 1-1.600 1.600h-13a1.600 1.600 0 0 1-1.600-1.600z" fill="#59628a"/></svg>
<span class="t" style="left:1641.20px;top:825.00px;font-size:12.00px;line-height:18px;color:#333;">-</span>
<svg style="left:1753px;top:824px;" width="16" height="18" viewBox="0 0 16 18"><path d="M8 17.400l-3.200-4a7.200 7.200 0 1 1 6.400 0z" fill="#6c7391"/><circle cx="8" cy="8.300" r="4.300" fill="#f0f4f7"/><circle cx="8" cy="8.300" r="2.900" fill="#6c7391"/><circle cx="8" cy="8.300" r="1.300" fill="#f0f4f7"/></svg>
<span class="t" style="left:1781.40px;top:825.00px;font-size:12.36px;line-height:18px;color:#222;letter-spacing:-0.323px;">Fém 3-Be</span>
<svg style="left:1870px;top:220px;" width="30" height="28" viewBox="0 0 30 28"><path d="M5.300 23.500l7-6.500M7.900 12.400l3.100-1.900l3 .2l4.200-6.100l6.200 5.900l-6.200 4.400l.4 3.400l-2.100 2.900z" fill="none" stroke="#4d5470" stroke-width="1.500" stroke-linejoin="round" stroke-linecap="round"/></svg>
<span class="t" style="left:1588.30px;top:922.00px;font-size:14.50px;line-height:20px;color:#222;letter-spacing:0.042px;">Elrendezés választása:</span>
<svg style="left:1589px;top:941px;" width="88" height="55" viewBox="0 0 88 55"><rect x="2.050" y="2.250" width="83.800" height="50.300" fill="none" stroke="#2f4468" stroke-width="2.300"/><path d="M63 2v42M2 44h84" stroke="#2f4468" stroke-width="2.200" fill="none"/><path d="M8 7.2h48.600" stroke="#2f4468" stroke-width="2.100"/><path d="M8 13.3h48.600" stroke="#2f4468" stroke-width="2.100"/><path d="M8 19.8h48.600" stroke="#2f4468" stroke-width="2.100"/><path d="M8 26.1h48.600" stroke="#2f4468" stroke-width="2.100"/><path d="M8 32.3h48.600" stroke="#2f4468" stroke-width="2.100"/><path d="M8 38.8h48.600" stroke="#2f4468" stroke-width="2.100"/><rect x="68.100" y="7.400" width="13" height="12.600" fill="none" stroke="#2f4468" stroke-width="2.300"/><rect x="68.100" y="26" width="13" height="12.600" fill="none" stroke="#2f4468" stroke-width="2.300"/></svg>
<svg style="left:1691px;top:941px;" width="88" height="55" viewBox="0 0 88 55"><rect x="1.750" y="2.250" width="83.800" height="50.300" fill="none" stroke="#c9c9c9" stroke-width="2.300"/><path d="M1.600 44h84" stroke="#c9c9c9" stroke-width="2.200"/><rect x="7.400" y="7.400" width="31" height="31" fill="none" stroke="#c9c9c9" stroke-width="2.300"/><rect x="48.600" y="7.400" width="31.500" height="31" fill="none" stroke="#c9c9c9" stroke-width="2.300"/></svg>
<svg style="left:1793px;top:941px;" width="88" height="55" viewBox="0 0 88 55"><rect x="1.750" y="2.250" width="83.800" height="50.300" fill="none" stroke="#c9c9c9" stroke-width="2.300"/><path d="M9 6.9h67" stroke="#c9c9c9" stroke-width="2"/><path d="M9 13.0h67" stroke="#c9c9c9" stroke-width="2"/><path d="M9 19.3h67" stroke="#c9c9c9" stroke-width="2"/><path d="M9 25.8h67" stroke="#c9c9c9" stroke-width="2"/><path d="M9 32.0h67" stroke="#c9c9c9" stroke-width="2"/><path d="M9 38.3h67" stroke="#c9c9c9" stroke-width="2"/><path d="M9 44.4h67" stroke="#c9c9c9" stroke-width="2"/></svg>
<div style="left:1425px;top:9.5px;width:439px;height:580.5px;background:#ffffff;border:1px solid #d4d4d4;border-left-color:#c4c4c4;border-top-color:#b9b9b9;box-shadow:1px 1.500px 2.500px rgba(0,0,0,.28);"></div>
<svg style="left:1862px;top:36px;" width="6" height="12" viewBox="0 0 6 12"><path d="M0 0l5 6l-5 6z" fill="#fff"/></svg>
<div style="left:1444px;top:29px;width:67px;height:28px;background:#fff;border:1.300px solid #14283d;border-radius:5px;"></div>
<span class="t" style="left:1451.70px;top:34.00px;font-size:13.00px;line-height:19px;color:#222;letter-spacing:0.046px;">Kamerák</span>
<div style="left:1729px;top:29px;width:117px;height:28px;background:#fff;border:1.300px solid #14283d;border-radius:5px;"></div>
<span class="t" style="left:1737.00px;top:34.00px;font-size:13.00px;line-height:19px;color:#222;letter-spacing:-0.265px;">Összes mellőzése</span>
<div style="left:1445px;top:63px;width:400px;height:340px;background:#d9dbdd;"></div>
<div style="left:1447px;top:65px;width:396.5px;height:32px;background:#e95c58;border-top:1px solid #f3a39f;"></div>
<div style="left:1447px;top:97px;width:396.5px;height:32.3px;background:#ffffff;"></div>
<span class="t" style="left:1460.00px;top:73.00px;font-size:12.60px;line-height:18px;color:#fff;font-weight:700;letter-spacing:0.308px;">Vészhelyzetkártya</span>
<span class="t" style="left:1676.90px;top:73.00px;font-size:12.00px;line-height:18px;color:#fff;font-weight:700;letter-spacing:0.079px;">2020.03.11. 16:32:55</span>
<svg style="left:1810px;top:74px;" width="16" height="16" viewBox="0 0 16 16"><path d="M2.300 2l11.600 11.400M13.900 2l-11.600 11.400" stroke="#fbd3cf" stroke-width="1.600" fill="none"/></svg>
<svg style="left:1461.5px;top:102px;" width="13" height="15" viewBox="0 0 13 15"><g fill="#555e85"><circle cx="6.400" cy="3.400" r="3.100"/><path d="M.2 14.700v-3.200c0-2.300 1.800-3.500 3.600-3.500h5.200c1.800 0 3.600 1.200 3.600 3.500v3.200z"/></g></svg>
<span class="t" style="left:1484.00px;top:102.00px;font-size:12.36px;line-height:18px;color:#474b5c;letter-spacing:-0.015px;">(nincs)</span>
<svg style="left:1716px;top:100px;" width="26" height="20" viewBox="0 0 26 20"><rect x="1.700" y="7.600" width="16.400" height="9.600" rx="1" fill="none" stroke="#4f5878" stroke-width="1.500"/><rect x="1.700" y="9.800" width="16.400" height="2.600" fill="#4f5878"/><path d="M15.400 3.600l-.6-2M18.800 5.200l1.400-1.600M21 8l1.500-.2" stroke="#4f5878" stroke-width="1.900" stroke-linecap="round"/></svg>
<span class="t" style="left:1744.50px;top:102.00px;font-size:12.36px;line-height:18px;color:#474b5c;letter-spacing:-0.338px;">Fém 2-Be</span>
<svg style="left:1808px;top:108px;" width="20" height="8" viewBox="0 0 20 8"><circle cx="3.2" cy="4.200" r="1.700" fill="none" stroke="#5b6488" stroke-width="1.100"/><circle cx="9.9" cy="4.200" r="1.700" fill="none" stroke="#5b6488" stroke-width="1.100"/><circle cx="16.8" cy="4.200" r="1.700" fill="none" stroke="#5b6488" stroke-width="1.100"/></svg>
<div style="left:1447px;top:133px;width:396.5px;height:32px;background:#e95c58;border-top:1px solid #f3a39f;"></div>
<div style="left:1447px;top:165px;width:396.5px;height:32.3px;background:#ffffff;"></div>
<span class="t" style="left:1460.00px;top:141.00px;font-size:12.60px;line-height:18px;color:#fff;font-weight:700;letter-spacing:0.308px;">Vészhelyzetkártya</span>
<span class="t" style="left:1676.90px;top:141.00px;font-size:12.00px;line-height:18px;color:#fff;font-weight:700;letter-spacing:0.079px;">2020.03.11. 16:40:35</span>
<svg style="left:1810px;top:142px;" width="16" height="16" viewBox="0 0 16 16"><path d="M2.300 2l11.600 11.400M13.900 2l-11.600 11.400" stroke="#fbd3cf" stroke-width="1.600" fill="none"/></svg>
<svg style="left:1461.5px;top:170px;" width="13" height="15" viewBox="0 0 13 15"><g fill="#555e85"><circle cx="6.400" cy="3.400" r="3.100"/><path d="M.2 14.700v-3.200c0-2.300 1.800-3.500 3.600-3.500h5.200c1.800 0 3.600 1.200 3.600 3.500v3.200z"/></g></svg>
<span class="t" style="left:1484.00px;top:170.00px;font-size:12.36px;line-height:18px;color:#474b5c;letter-spacing:-0.015px;">(nincs)</span>
<svg style="left:1716px;top:168px;" width="26" height="20" viewBox="0 0 26 20"><rect x="1.700" y="7.600" width="16.400" height="9.600" rx="1" fill="none" stroke="#4f5878" stroke-width="1.500"/><rect x="1.700" y="9.800" width="16.400" height="2.600" fill="#4f5878"/><path d="M15.400 3.600l-.6-2M18.800 5.200l1.400-1.600M21 8l1.500-.2" stroke="#4f5878" stroke-width="1.900" stroke-linecap="round"/></svg>
<span class="t" style="left:1744.50px;top:170.00px;font-size:12.36px;line-height:18px;color:#474b5c;letter-spacing:-0.338px;">Fém 2-Be</span>
<svg style="left:1808px;top:176px;" width="20" height="8" viewBox="0 0 20 8"><circle cx="3.2" cy="4.200" r="1.700" fill="none" stroke="#5b6488" stroke-width="1.100"/><circle cx="9.9" cy="4.200" r="1.700" fill="none" stroke="#5b6488" stroke-width="1.100"/><circle cx="16.8" cy="4.200" r="1.700" fill="none" stroke="#5b6488" stroke-width="1.100"/></svg>
<div style="left:1447px;top:201px;width:396.5px;height:32px;background:#e95c58;border-top:1px solid #f3a39f;"></div>
<div style="left:1447px;top:233px;width:396.5px;height:32.3px;background:#ffffff;"></div>
<span class="t" style="left:1460.00px;top:209.00px;font-size:12.60px;line-height:18px;color:#fff;font-weight:700;letter-spacing:-0.097px;">Erőszakos nyitás</span>
<span class="t" style="left:1676.90px;top:209.00px;font-size:12.00px;line-height:18px;color:#fff;font-weight:700;letter-spacing:0.079px;">2020.03.11. 16:41:21</span>
<svg style="left:1810px;top:210px;" width="16" height="16" viewBox="0 0 16 16"><path d="M2.300 2l11.600 11.400M13.900 2l-11.600 11.400" stroke="#fbd3cf" stroke-width="1.600" fill="none"/></svg>
<svg style="left:1461.5px;top:238px;" width="13" height="15" viewBox="0 0 13 15"><g fill="#555e85"><circle cx="6.400" cy="3.400" r="3.100"/><path d="M.2 14.700v-3.200c0-2.300 1.800-3.500 3.600-3.500h5.200c1.800 0 3.600 1.200 3.600 3.500v3.200z"/></g></svg>
<span class="t" style="left:1484.00px;top:238.00px;font-size:12.36px;line-height:18px;color:#474b5c;letter-spacing:-0.015px;">(nincs)</span>
<svg style="left:1736px;top:238px;" width="15" height="17" viewBox="0 0 15 17"><rect x="2.300" y=".4" width="9.800" height="14" fill="#555e85"/><path d="M.9 14.600h12.800" stroke="#555e85" stroke-width="1.900"/><rect x="7.700" y="7" width="1.200" height="1.400" fill="#fff"/></svg>
<span class="t" style="left:1763.50px;top:238.00px;font-size:12.36px;line-height:18px;color:#474b5c;letter-spacing:-0.532px;">Fém 3</span>
<svg style="left:1808px;top:244px;" width="20" height="8" viewBox="0 0 20 8"><circle cx="3.2" cy="4.200" r="1.700" fill="none" stroke="#5b6488" stroke-width="1.100"/><circle cx="9.9" cy="4.200" r="1.700" fill="none" stroke="#5b6488" stroke-width="1.100"/><circle cx="16.8" cy="4.200" r="1.700" fill="none" stroke="#5b6488" stroke-width="1.100"/></svg>
<div style="left:1447px;top:269px;width:396.5px;height:32px;background:#e95c58;border-top:1px solid #f3a39f;"></div>
<div style="left:1447px;top:301px;width:396.5px;height:32.3px;background:#ffffff;"></div>
<span class="t" style="left:1460.00px;top:277.00px;font-size:12.60px;line-height:18px;color:#fff;font-weight:700;letter-spacing:-0.097px;">Erőszakos nyitás</span>
<span class="t" style="left:1676.90px;top:277.00px;font-size:12.00px;line-height:18px;color:#fff;font-weight:700;letter-spacing:0.079px;">2020.03.11. 16:41:21</span>
<svg style="left:1810px;top:278px;" width="16" height="16" viewBox="0 0 16 16"><path d="M2.300 2l11.600 11.400M13.900 2l-11.600 11.400" stroke="#fbd3cf" stroke-width="1.600" fill="none"/></svg>
<svg style="left:1461.5px;top:306px;" width="13" height="15" viewBox="0 0 13 15"><g fill="#555e85"><circle cx="6.400" cy="3.400" r="3.100"/><path d="M.2 14.700v-3.200c0-2.300 1.800-3.500 3.600-3.500h5.200c1.800 0 3.600 1.200 3.600 3.500v3.200z"/></g></svg>
<span class="t" style="left:1484.00px;top:306.00px;font-size:12.36px;line-height:18px;color:#474b5c;letter-spacing:-0.015px;">(nincs)</span>
<svg style="left:1736px;top:306px;" width="15" height="17" viewBox="0 0 15 17"><rect x="2.300" y=".4" width="9.800" height="14" fill="#555e85"/><path d="M.9 14.600h12.800" stroke="#555e85" stroke-width="1.900"/><rect x="7.700" y="7" width="1.200" height="1.400" fill="#fff"/></svg>
<span class="t" style="left:1763.50px;top:306.00px;font-size:12.36px;line-height:18px;color:#474b5c;letter-spacing:-0.532px;">Fém 3</span>
<svg style="left:1808px;top:312px;" width="20" height="8" viewBox="0 0 20 8"><circle cx="3.2" cy="4.200" r="1.700" fill="none" stroke="#5b6488" stroke-width="1.100"/><circle cx="9.9" cy="4.200" r="1.700" fill="none" stroke="#5b6488" stroke-width="1.100"/><circle cx="16.8" cy="4.200" r="1.700" fill="none" stroke="#5b6488" stroke-width="1.100"/></svg>
<div style="left:1447px;top:337px;width:396.5px;height:32px;background:#e95c58;border-top:1px solid #f3a39f;"></div>
<div style="left:1447px;top:369px;width:396.5px;height:32.3px;background:#ffffff;"></div>
<span class="t" style="left:1460.00px;top:345.00px;font-size:12.60px;line-height:18px;color:#fff;font-weight:700;letter-spacing:-0.097px;">Erőszakos nyitás</span>
<span class="t" style="left:1676.90px;top:345.00px;font-size:12.00px;line-height:18px;color:#fff;font-weight:700;letter-spacing:0.079px;">2020.03.11. 16:41:26</span>
<svg style="left:1810px;top:346px;" width="16" height="16" viewBox="0 0 16 16"><path d="M2.300 2l11.600 11.400M13.900 2l-11.600 11.400" stroke="#fbd3cf" stroke-width="1.600" fill="none"/></svg>
<svg style="left:1461.5px;top:374px;" width="13" height="15" viewBox="0 0 13 15"><g fill="#555e85"><circle cx="6.400" cy="3.400" r="3.100"/><path d="M.2 14.700v-3.200c0-2.300 1.800-3.500 3.600-3.500h5.200c1.800 0 3.600 1.200 3.600 3.500v3.200z"/></g></svg>
<span class="t" style="left:1484.00px;top:374.00px;font-size:12.36px;line-height:18px;color:#474b5c;letter-spacing:-0.015px;">(nincs)</span>
<svg style="left:1736px;top:374px;" width="15" height="17" viewBox="0 0 15 17"><rect x="2.300" y=".4" width="9.800" height="14" fill="#555e85"/><path d="M.9 14.600h12.800" stroke="#555e85" stroke-width="1.900"/><rect x="7.700" y="7" width="1.200" height="1.400" fill="#fff"/></svg>
<span class="t" style="left:1763.50px;top:374.00px;font-size:12.36px;line-height:18px;color:#474b5c;letter-spacing:-0.532px;">Fém 2</span>
<svg style="left:1808px;top:380px;" width="20" height="8" viewBox="0 0 20 8"><circle cx="3.2" cy="4.200" r="1.700" fill="none" stroke="#5b6488" stroke-width="1.100"/><circle cx="9.9" cy="4.200" r="1.700" fill="none" stroke="#5b6488" stroke-width="1.100"/><circle cx="16.8" cy="4.200" r="1.700" fill="none" stroke="#5b6488" stroke-width="1.100"/></svg>
<div style="left:1863.2px;top:226.5px;width:1.6px;height:6px;background:#9d9d9d;"></div>
</body></html>
